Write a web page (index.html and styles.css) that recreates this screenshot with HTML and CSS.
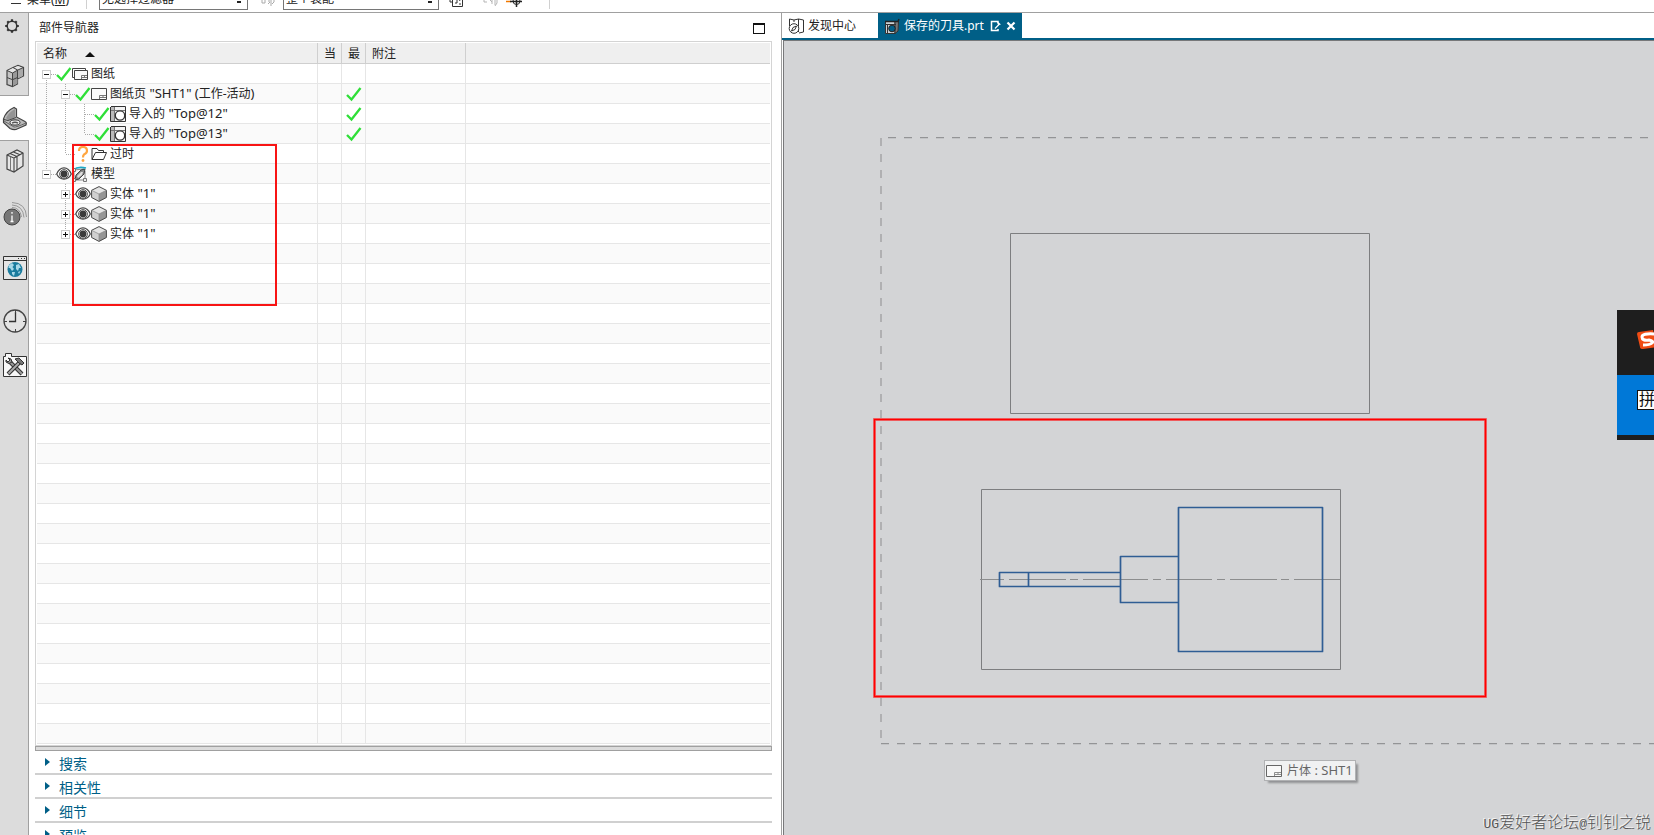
FILE: index.html
```html
<!DOCTYPE html>
<html lang="zh-CN">
<head>
<meta charset="utf-8">
<title>部件导航器</title>
<link rel="stylesheet" href="styles.css">
</head>
<body>
<svg class="defs" aria-hidden="true">
  <symbol id="check" viewBox="0 0 16 16"><path d="M1 9L5.500 13.500L14.500 2" fill="none" stroke="#2fdf38" stroke-width="2.300"/></symbol>
  <symbol id="eye" viewBox="0 0 16 16"><path d="M.7 8C4-.2 12-.2 15.300 8C12 14.800 4 14.800 .7 8Z" fill="#fff" stroke="#444" stroke-width="1.200"/><circle cx="8" cy="8" r="4.400" fill="#fff" stroke="#555"/><circle cx="8" cy="8" r="3.400" fill="#3c3c3c"/></symbol>
  <symbol id="sheet" viewBox="0 0 16 16"><path d="M.5 2.500H15.500V13.500H.5Z" fill="#fafafa" stroke="#444"/><path d="M8.500 13V9.500H15M8.500 11.500H15M12 9.500V11.500" fill="none" stroke="#777"/></symbol>
  <symbol id="sheets" viewBox="0 0 16 16"><path d="M2.500 11.500H.5V2.500H13.500V4" fill="none" stroke="#444"/><path d="M2.500 4.500H15.500V13.500H2.500Z" fill="#fafafa" stroke="#444"/><path d="M9.500 13V9.500H15M9.500 11.500H15M12.500 9.500V11.500" fill="none" stroke="#777"/></symbol>
  <symbol id="view" viewBox="0 0 16 16"><path d="M.5 1V15.500H15.500V.5H1" fill="#f3f3f3" stroke="#333"/><path d="M1 1H4V15H1Z" fill="#bbb"/><path d="M4.500 1V15M1 4.500H15" stroke="#777" fill="none"/><circle cx="10" cy="9.500" r="4.700" fill="#fff" stroke="#333" stroke-width="1.300"/></symbol>
  <symbol id="cube" viewBox="0 0 16 16"><path d="M8 .6L15.400 4.300V11.500L8 15.400L.6 11.500V4.300Z" fill="#e4e4e4"/><path d="M.6 4.300L8 8V15.400L.6 11.500Z" fill="#d0d0d0"/><path d="M15.400 4.300L8 8V15.400L15.400 11.500Z" fill="#969696"/><path d="M8 .6L15.400 4.300V11.500L8 15.400L.6 11.500V4.300Z" fill="none" stroke="#4a4a4a"/><path d="M.6 4.300L8 8L15.400 4.300M8 8V15" fill="none" stroke="#888" stroke-width=".7"/></symbol>
</svg>

<header class="toolbar">
  <button class="menu" type="button"><svg width="12" height="10" viewBox="0 0 12 10"><path d="M1 0.500H11M1 4.500H11M1 8.500H11" stroke="#333"/></svg><span>菜单(<u>M</u>)</span></button>
  <span class="rule rule-menu"></span>
  <select class="pick" aria-label="选择过滤器"><option>无选择过滤器</option></select>
  <svg class="tool tool-a" viewBox="0 0 16 16"><path d="M2 1V12H5M5 12V6H9V11M11 5V15M11 8H14V11L12 13M8 13L10 11" fill="none" stroke="#aaa"/></svg>
  <select class="pick pick-b" aria-label="选择范围"><option>整个装配</option></select>
  <svg class="tool tool-b" viewBox="0 0 16 16"><path d="M3.500 4V15.500H13.500V2M1 4V11H3M6 8H8V12H6M10 8L11 10M10 13H12" fill="none" stroke="#333"/></svg>
  <svg class="tool tool-c" viewBox="0 0 16 16"><path d="M1 4V11H4M6 8L9 11M9 6V13M12 6V14M14 8V12L12 15" fill="none" stroke="#b5b5b5"/></svg>
  <svg class="tool tool-d" viewBox="0 0 16 16"><path d="M0 10.500H5" stroke="#f07800" stroke-width="1.500"/><circle cx="10.500" cy="10" r="3.500" fill="none" stroke="#333"/><path d="M4 10.500H16M10.500 4V16" stroke="#222" stroke-width="1.500"/></svg>
  <span class="rule"></span>
</header>

<div class="workspace">
  <nav class="rail" aria-label="资源条">
    <div class="rail-group rail-top">
      <button class="rail-btn gear" type="button" aria-label="选项"><svg width="16" height="16" viewBox="0 0 16 16"><circle cx="8" cy="8" r="4.800" fill="none" stroke="#333" stroke-width="1.500"/><path d="M8 1.200V3M8 13V14.800M1.200 8H3M13 8H14.800M3.300 3.300L4.500 4.500M11.500 11.500L12.700 12.700M3.300 12.700L4.500 11.500M11.500 4.500L12.700 3.300" stroke="#333" stroke-width="2.200"/></svg></button>
      <button class="rail-btn parts" type="button" aria-label="装配导航器"><svg width="20" height="24" viewBox="0 0 20 24"><path d="M2 6.500L8 3.500L13 1.500L18.500 3.500V12L12.500 15V20L7.500 22.500L2 20.500Z" fill="#c4c4c4" stroke="#444" stroke-width="1.200"/><path d="M2.500 6.700L8 4L12 5.800L7.500 8.500ZM9 3.500L13 2L17.500 3.700L13 5.500Z" fill="#e6e6e6"/><path d="M7.500 9L12.500 6.500V19.500L7.500 22Z" fill="#999"/><path d="M13 6.500L18 4V11.700L13 14.200Z" fill="#a9a9a9"/><path d="M2 6.500L7.500 9L12.500 6.200L18 3.700M7.500 9V22.500M12.500 6V15M2 13.500L7.500 15.700L12.500 13.500M8 3.500L12.500 6" fill="none" stroke="#444"/></svg></button>
    </div>
    <div class="rail-group rail-active">
      <button class="rail-btn" type="button" aria-label="部件导航器"><svg width="26" height="26" viewBox="0 0 26 26"><path d="M1.500 14Q4 6 12 2.500L14.500 4V12L23 16.500Q25 17.500 24 20L14 24.500Q11 25 8 23.500L1.500 17.500Z" fill="#b9b9b9" stroke="#444" stroke-width="1.200"/><path d="M4 13Q7 7 13 4V12.500L6 15Z" fill="#949494"/><path d="M2 14.500L6 15.500L14 12.500" fill="none" stroke="#444"/><path d="M2 16L12 22Q14 22.500 24 18" fill="none" stroke="#666"/><ellipse cx="13" cy="17.500" rx="5" ry="2.600" fill="#eee" stroke="#333"/><path d="M10 18.200Q13 16.500 16 18.200" fill="none" stroke="#555" stroke-width="1.500"/></svg></button>
    </div>
    <div class="rail-group rail-rest">
      <button class="rail-btn books" type="button" aria-label="重用库"><svg width="20" height="26" viewBox="0 0 20 26"><path d="M2 7L12 2L18 5V18L9 24L2 21Z" fill="#e6e6e6" stroke="#444" stroke-width="1.200"/><path d="M2 7L9 10V24M9 10L18 5M5 5.500L12 8.500V22M8.500 4L15 6.700" fill="none" stroke="#444" stroke-width="1.100"/><path d="M5.500 8.500V22.500" stroke="#777"/></svg></button>
      <button class="rail-btn info" type="button" aria-label="信息"><svg width="26" height="26" viewBox="0 0 26 26"><circle cx="10" cy="16" r="8" fill="#777" stroke="#444"/><path d="M10 11V12.800M10 14.500V20.500M8.500 20.500H11.500" stroke="#fff" stroke-width="1.300"/><path d="M10 6.500Q18 6.500 19.500 16M10 4Q21 4.500 22 16.500M10 1.500Q24 2 24.500 16" fill="none" stroke="#999"/></svg></button>
      <button class="rail-btn web" type="button" aria-label="Web 浏览器"><svg width="24" height="24" viewBox="0 0 24 24"><path d="M.5.5H23.500V23.500H.5Z" fill="#e5e5e5" stroke="#333"/><path d="M1 4.500H23" stroke="#333"/><path d="M15 2.500H16M18 2.500H19M21 2.500H22" stroke="#333"/><circle cx="12" cy="13.500" r="7.500" fill="#1b7c9e"/><path d="M6 9L9 7L11 9L9.500 11L11 13L9 15L7 12L5.500 12ZM9 16L12 16L11 20L9 18ZM13 9L16 8L18 12L16 12L15 15L13 13ZM15 16L17.500 15L16 18Z" fill="#a8d8e8"/></svg></button>
      <button class="rail-btn clock" type="button" aria-label="历史记录"><svg width="24" height="24" viewBox="0 0 24 24"><circle cx="12" cy="12" r="11" fill="#e4e4e4" stroke="#444" stroke-width="1.300"/><path d="M12.500 3V12.500H6" fill="none" stroke="#333" stroke-width="1.300"/><path d="M12.500 1V4M12.500 20V23M1 12.500H4M20 12.500H23" stroke="#444"/></svg></button>
      <button class="rail-btn roles" type="button" aria-label="角色"><svg width="24" height="24" viewBox="0 0 24 24"><path d="M.5 3.500H2.500V.5H8.500V3.500H23.500V23.500H.5Z" fill="#f8f8f8" stroke="#333"/><path d="M7 9L19 21" stroke="#333" stroke-width="4"/><path d="M7 9L19 21" stroke="#999" stroke-width="2"/><path d="M17 9L5 21" stroke="#333" stroke-width="4"/><path d="M16 10L5.500 20.500" stroke="#aaa" stroke-width="2"/><path d="M3 7L5 9L7 7L5 5Q9 5 9 9Q6 12 3 9Z" fill="#999" stroke="#333"/><path d="M12 6L16 5L21 10L19 12L16 10L14 8Z" fill="#777" stroke="#333"/></svg></button>
    </div>
  </nav>

  <aside class="panel">
    <div class="panel-head"><h1>部件导航器</h1><button class="max" type="button" aria-label="最大化"></button></div>
    <div class="tree-frame">
      <table class="tree">
        <colgroup><col class="c-name"><col class="c-flag"><col class="c-flag"><col class="c-note"><col></colgroup>
        <thead><tr><th><span class="sort">名称<svg width="10" height="5" viewBox="0 0 10 5"><path d="M0 5L5 0L10 5Z" fill="#111"/></svg></span></th><th>当</th><th>最</th><th>附注</th><th></th></tr></thead>
        <tbody>
          <tr><td><div class="node"><i class="g down right box"></i><svg class="ic"><use href="#check"/></svg><svg class="ic"><use href="#sheets"/></svg><span>图纸</span></div></td><td></td><td></td><td></td><td></td></tr>
          <tr><td><div class="node"><i class="g full"></i><i class="g full right box"></i><svg class="ic"><use href="#check"/></svg><svg class="ic"><use href="#sheet"/></svg><span>图纸页<b> "SHT1" (</b>工作-活动<b>)</b></span></div></td><td></td><td><svg class="ic"><use href="#check"/></svg></td><td></td><td></td></tr>
          <tr><td><div class="node"><i class="g full"></i><i class="g full"></i><i class="g full right"></i><svg class="ic"><use href="#check"/></svg><svg class="ic"><use href="#view"/></svg><span>导入的<b> "Top@12"</b></span></div></td><td></td><td><svg class="ic"><use href="#check"/></svg></td><td></td><td></td></tr>
          <tr><td><div class="node"><i class="g full"></i><i class="g full"></i><i class="g up right"></i><svg class="ic"><use href="#check"/></svg><svg class="ic"><use href="#view"/></svg><span>导入的<b> "Top@13"</b></span></div></td><td></td><td><svg class="ic"><use href="#check"/></svg></td><td></td><td></td></tr>
          <tr><td><div class="node"><i class="g full"></i><i class="g up right"></i><svg class="ic" viewBox="0 0 16 16"><path d="M4 5Q4 1 8 1T12 5Q12 7 9 8.500Q8 9.500 8 11.500" fill="none" stroke="#ffa640" stroke-width="2.200"/><circle cx="8" cy="14.500" r="1.400" fill="#ffa640"/></svg><svg class="ic" viewBox="0 0 16 16"><path d="M1 13.500V2.500H6L7.500 4.500H12.500V6.500M1 13.500L4.500 6.500H15.500L12.500 13.500Z" fill="#fff" stroke="#333"/></svg><span>过时</span></div></td><td></td><td></td><td></td><td></td></tr>
          <tr><td><div class="node"><i class="g up right box"></i><svg class="ic"><use href="#eye"/></svg><svg class="ic" viewBox="0 0 16 16"><path d="M2 4L12 3M2 4V14M2 14H13M13 14V5" fill="none" stroke="#888"/><path d="M4 9L9 4L13 3L12 8L7 13L3 14Z" fill="#888" stroke="#444"/><path d="M5 10L9 6L11 6L10 9L6 12Z" fill="#ddd"/><path d="M1 4Q6 0 14 2" fill="none" stroke="#1ba7c5" stroke-width="1.600"/><path d="M.5 2.500H3.500V5.500H.5ZM.5 12.500H3.500V15.500H.5ZM11.500 12.500H14.500V15.500H11.500Z" fill="#eee" stroke="#777"/></svg><span>模型</span></div></td><td></td><td></td><td></td><td></td></tr>
          <tr><td><div class="node"><i class="g"></i><i class="g full right box plus"></i><svg class="ic"><use href="#eye"/></svg><svg class="ic"><use href="#cube"/></svg><span>实体<b> "1"</b></span></div></td><td></td><td></td><td></td><td></td></tr>
          <tr><td><div class="node"><i class="g"></i><i class="g full right box plus"></i><svg class="ic"><use href="#eye"/></svg><svg class="ic"><use href="#cube"/></svg><span>实体<b> "1"</b></span></div></td><td></td><td></td><td></td><td></td></tr>
          <tr><td><div class="node"><i class="g"></i><i class="g up right box plus"></i><svg class="ic"><use href="#eye"/></svg><svg class="ic"><use href="#cube"/></svg><span>实体<b> "1"</b></span></div></td><td></td><td></td><td></td><td></td></tr>
          <tr><td></td><td></td><td></td><td></td><td></td></tr>
          <tr><td></td><td></td><td></td><td></td><td></td></tr>
          <tr><td></td><td></td><td></td><td></td><td></td></tr>
          <tr><td></td><td></td><td></td><td></td><td></td></tr>
          <tr><td></td><td></td><td></td><td></td><td></td></tr>
          <tr><td></td><td></td><td></td><td></td><td></td></tr>
          <tr><td></td><td></td><td></td><td></td><td></td></tr>
          <tr><td></td><td></td><td></td><td></td><td></td></tr>
          <tr><td></td><td></td><td></td><td></td><td></td></tr>
          <tr><td></td><td></td><td></td><td></td><td></td></tr>
          <tr><td></td><td></td><td></td><td></td><td></td></tr>
          <tr><td></td><td></td><td></td><td></td><td></td></tr>
          <tr><td></td><td></td><td></td><td></td><td></td></tr>
          <tr><td></td><td></td><td></td><td></td><td></td></tr>
          <tr><td></td><td></td><td></td><td></td><td></td></tr>
          <tr><td></td><td></td><td></td><td></td><td></td></tr>
          <tr><td></td><td></td><td></td><td></td><td></td></tr>
          <tr><td></td><td></td><td></td><td></td><td></td></tr>
          <tr><td></td><td></td><td></td><td></td><td></td></tr>
          <tr><td></td><td></td><td></td><td></td><td></td></tr>
          <tr><td></td><td></td><td></td><td></td><td></td></tr>
          <tr><td></td><td></td><td></td><td></td><td></td></tr>
          <tr><td></td><td></td><td></td><td></td><td></td></tr>
          <tr><td></td><td></td><td></td><td></td><td></td></tr>
          <tr><td></td><td></td><td></td><td></td><td></td></tr>
        </tbody>
      </table>
      <div class="mark"></div>
    </div>
    <div class="splitter"></div>
    <button class="fold" type="button">搜索</button>
    <button class="fold" type="button">相关性</button>
    <button class="fold" type="button">细节</button>
    <button class="fold" type="button">预览</button>
  </aside>

  <main class="stage">
    <div class="tabs">
      <button class="tab" type="button"><svg width="16" height="16" viewBox="0 0 16 16"><path d="M1.500 8V1L6 2L10.500 1V6M10.500 1L15.500 2V14L11 15M10.500 1V14M6 2V4" fill="none" stroke="#333"/><circle cx="6" cy="10.500" r="4.800" fill="#fff" stroke="#333"/><path d="M3.500 13L5 9.500L8.500 8L7 11.500Z" fill="none" stroke="#333"/></svg>发现中心</button>
      <div class="tab on"><svg width="16" height="16" viewBox="0 0 16 16"><path d="M1.500 3.500H11V15.500H1.500Z" fill="#cdd3d6" stroke="#333"/><path d="M11 3.500H14.500L14 13L11 15.500Z" fill="#777" stroke="#333"/><path d="M1 3.500H14L15 1" stroke="#222" stroke-width="1.500" fill="none"/><path d="M1 6.500H12M3.500 6V15" stroke="#333" fill="none"/><circle cx="8" cy="10.500" r="3.300" fill="#005f87" stroke="#222"/></svg><span>保存的刀具.prt</span><svg class="edit" width="12" height="12" viewBox="0 0 12 12"><path d="M8 3.500V1.500H1.500V10.500H8V9" fill="none" stroke="#fff" stroke-width="1.500"/><path d="M5 8.500L9.500 4" stroke="#fff" stroke-width="1.300"/><path d="M7 1L11 4.500L8 5Z" fill="#fff"/></svg><button class="close" type="button" aria-label="关闭"><svg width="10" height="10" viewBox="0 0 10 10"><path d="M1.500 1.500L8.500 8.500M8.500 1.500L1.500 8.500" stroke="#fff" stroke-width="2.200"/></svg></button></div>
    </div>
    <div class="canvas">
      <svg class="drawing" role="img" aria-label="图纸 SHT1">
        <g transform="translate(-784 -41)" fill="none">
          <path d="M881 138V739" stroke="#b0b0b2" stroke-width="2" stroke-dasharray="8 8"/>
          <path d="M888 137.500H4000M881 743.500H4000" stroke="#939496" stroke-dasharray="8 8"/>
          <path d="M888 138.500H4000M881 744.500H4000" stroke="#c3c4c6" stroke-dasharray="8 8"/>
          <path d="M1010.500 233.500H1369.500V413.500H1010.500ZM981.500 489.500H1340.500V669.500H981.500Z" stroke="#7d7e80"/>
          <path d="M980 579.500H1004M1009 579.500H1066M1070 579.500H1078M1083 579.500H1148M1153 579.500H1161M1166 579.500H1212M1217 579.500H1225M1230 579.500H1277M1281 579.500H1289M1294 579.500H1340" stroke="#8c8d8e"/>
          <g stroke="#2f5d94"><path d="M1120 572.500H999.500V586.500H1120M1178 556.500H1120.500V602.500H1178M1178.500 507.500H1322.500V651.500H1178.500ZM1028.500 572V587" stroke-linejoin="round" stroke-width="1.700"/></g>
          <path d="M874.500 419.500H1485.500V696.500H874.500Z" stroke="#e87a7c" stroke-width="3"/><path d="M874.500 419.500H1485.500V696.500H874.500Z" stroke="#f00" stroke-width="1.500"/>
        </g>
      </svg>
      <div class="tip"><svg class="ic"><use href="#sheet"/></svg><span>片体<b> : SHT1</b></span></div>
      <div class="ime">
        <div class="ime-logo"><svg width="18" height="20" viewBox="0 0 18 20"><path d="M0 4Q0 2 2 2L16 0L20 17L6 19Q3 19 3 17Z" fill="#f04c14"/><path d="M18 4Q5 3 5 7T12 10Q17 11 15 13T6 15" fill="none" stroke="#fff" stroke-width="3"/></svg></div>
        <div class="ime-mode"><span>拼</span></div>
      </div>
      <div class="credit"><span>UG</span>爱好者论坛<span>@</span>钊钊之锐</div>
    </div>
  </main>
</div>
</body>
</html>
```
FILE: styles.css
```css
*, *::before, *::after { box-sizing: border-box; }
body {
  margin: 0;
  height: 100vh;
  overflow: hidden;
  display: flex;
  flex-direction: column;
  background: #fff;
  color: #222;
  font: 12px/16px "Noto Sans", "Noto Sans CJK SC", sans-serif;
}
button { font: inherit; color: inherit; background: none; border: 0; padding: 0; }
.defs { display: none; }
svg { display: block; flex: none; }

/* toolbar */
.toolbar {
  flex: none;
  height: 13px;
  overflow: hidden;
  display: flex;
  align-items: flex-end;
  border-bottom: 1px solid #a0a0a0;
  padding-bottom: 2px;
}
.menu { display: flex; align-items: center; width: 76px; height: 20px; margin-left: 10px; gap: 5px; white-space: nowrap; }
.rule { width: 1px; height: 20px; margin-bottom: 1px; background: #d0d0d0; }
.pick {
  appearance: none;
  width: 149px;
  height: 24px;
  margin-left: 12px;
  padding: 2px 2px 0;
  border: 1px solid #767676;
  border-radius: 0;
  color: #222;
  font: inherit;
  background: linear-gradient(#222, #222) right 6px top 14px / 4px 2px no-repeat #fff;
}
.pick-b { width: 156px; margin-left: 7px; }
.tool { width: 16px; height: 16px; margin-bottom: 3px; }
.tool-a { margin-left: 12px; }
.tool-b { margin-left: 10px; }
.tool-c { margin-left: 18px; }
.tool-d { margin: 0 27px 3px 7px; }

.workspace { flex: 1; min-height: 0; display: flex; }

/* resource rail */
.rail { flex: none; width: 29px; display: flex; flex-direction: column; }
.rail-group { border-right: 1px solid #a0a0a0; background: #dcdcdc; }
.rail-top { border-bottom: 1px solid #a0a0a0; }
.rail-active { border-right: 0; background: #fff; }
.rail-rest { flex: 1; border-top: 1px solid #a0a0a0; }
.rail-btn { display: flex; width: 28px; height: 44px; padding-left: 2px; align-items: center; justify-content: center; }
.gear { width: 24px; height: 26px; margin-bottom: 18px; padding: 0; }
.parts { height: 38px; }
.books { height: 40px; }
.info { height: 66px; }
.web { height: 42px; }
.clock { height: 64px; }
.roles { height: 24px; }

/* navigator */
.panel { flex: 0 0 752px; min-width: 0; padding: 0 9px 0 6px; display: flex; flex-direction: column; overflow: hidden; }
.panel-head { flex: none; height: 28px; display: flex; align-items: center; justify-content: space-between; padding: 2px 7px 0 4px; }
h1 { margin: 0; font: inherit; }
.max { width: 12px; height: 11px; border: 1px solid #111; border-top-width: 2px; }
.tree-frame { position: relative; flex: none; border: 1px solid #d4d4d4; padding: 1px; }
.tree { width: 100%; table-layout: fixed; border-collapse: separate; border-spacing: 0; }
.c-name { width: 281px; }
.c-flag { width: 24px; }
.c-note { width: 100px; }
th, td { height: 20px; padding: 0; border-right: 1px solid #e6e6e6; border-bottom: 1px solid #e6e6e6; text-align: left; font-weight: 400; }
th { height: 21px; padding: 2px 0 0 6px; background: #efefef; border-color: #cfcfcf; }
th:last-child, td:last-child { border-right: 0; }
tbody tr:nth-child(even) { background: #fafafa; }
td > .ic { margin: auto; }
.sort { display: flex; align-items: center; gap: 18px; }
.node { display: flex; align-items: center; height: 19px; }
.node span { margin-left: 3px; white-space: pre; }
.node b, .tip b { font-size: 13px; font-weight: 400; }
.ic { width: 16px; height: 16px; }

/* dotted tree guides and expander boxes */
.g { position: relative; flex: none; width: 19px; height: 19px; }
.full, .down, .up { background: repeating-linear-gradient(#aaa 0 1px, transparent 1px 2px) 9px 0 / 1px 19px no-repeat; }
.up { background-size: 1px 10px; }
.down { background-position: 9px 10px; background-size: 1px 9px; }
.right::before { content: ""; position: absolute; left: 10px; right: 0; top: 10px; height: 1px; background: repeating-linear-gradient(90deg, #aaa 0 1px, transparent 1px 2px); }
.box::after {
  content: "";
  position: absolute;
  left: 5px;
  top: 6px;
  width: 9px;
  height: 9px;
  border: 1px solid #ccc;
  background: linear-gradient(#111, #111) center / 5px 1px no-repeat #fff;
}
.plus::after { background: linear-gradient(#111, #111) center / 5px 1px no-repeat, linear-gradient(#111, #111) center / 1px 5px no-repeat #fff; }
.mark { position: absolute; left: 36px; top: 102px; width: 205px; height: 162px; border: 2px solid #f81414; }

.splitter { flex: none; height: 5px; border: 1px solid #a0a0a0; background: #dcdcdc; }
.fold {
  flex: none;
  display: flex;
  align-items: center;
  gap: 9px;
  height: 24px;
  padding: 4px 0 0 10px;
  border-bottom: 2px solid #d0d0d0;
  color: #005f87;
  font-size: 14px;
}
.fold::before { content: ""; margin-bottom: 4px; border: 4px solid transparent; border-left: 5px solid #005f87; border-right: 0; }

/* graphics window */
.stage { flex: 1; min-width: 0; display: flex; flex-direction: column; border-left: 1px solid #a0a0a0; }
.tabs { flex: none; display: flex; height: 27px; border-bottom: 2px solid #005f87; }
.tab { display: flex; align-items: center; width: 96px; padding-left: 6px; gap: 4px; white-space: nowrap; }
.on { width: 144px; color: #fff; background: #005f87; }
.edit { margin-left: 2px; }
.canvas {
  position: relative;
  flex: 1;
  min-height: 0;
  margin-left: 1px;
  overflow: hidden;
  border: solid #77787a;
  border-width: 1px 0 0 1px;
  background: #d3d4d6;
}
.drawing { width: 100%; height: 100%; }
.tip {
  position: absolute;
  left: 480px;
  top: 719px;
  display: flex;
  align-items: center;
  gap: 5px;
  height: 21px;
  padding: 0 2px 0 1px;
  border: 1px solid #b0b1b3;
  background: #f0f1f2;
  color: #666;
  white-space: nowrap;
  box-shadow: 3px 3px 2px -1px #909193;
}
.tip .ic { opacity: 0.8; }
.ime { position: absolute; right: 0; top: 269px; width: 37px; background: #1e1e1e; padding-bottom: 5px; overflow: hidden; }
.ime-logo { height: 65px; padding: 20px 0 0 20px; }
.ime-mode { height: 60px; padding: 15px 0 0 20px; background: #0078d7; }
.ime-mode span { display: block; width: 20px; height: 20px; border: 1px solid #111; background: #fff; color: #111; font-size: 16px; line-height: 17px; padding-left: 1px; }
.credit {
  position: absolute;
  right: 3px;
  bottom: 0;
  color: #555;
  font: 300 16px/20px "Noto Sans CJK SC", sans-serif;
  text-shadow: -1px -1px 0 #f4f4f4;
  white-space: nowrap;
}
.credit span { font: 13px/20px "Liberation Mono", monospace; }
```
